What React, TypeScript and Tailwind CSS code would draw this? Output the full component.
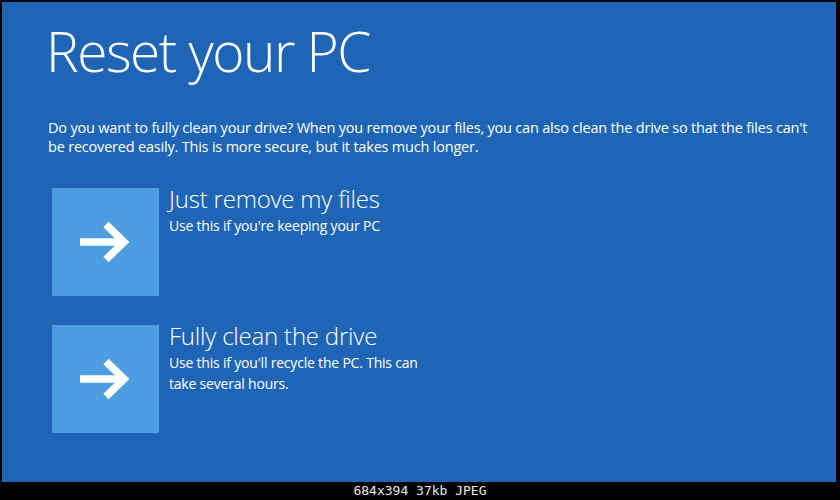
const sans = { fontFamily: '"Open Sans", "Noto Sans", sans-serif' };

function ArrowTile() {
  return (
    <div className="flex h-[108px] w-[107px] shrink-0 items-center justify-center bg-[#4c9ee0]">
      <svg width="54" height="44" viewBox="0 0 54 44" className="-ml-[2px]">
        <path d="M2 22H44" stroke="#fff" strokeWidth="7.5" />
        <path d="M28 4.5L46 22L28 39.5" stroke="#fff" strokeWidth="7.5" fill="none" strokeLinejoin="miter" />
      </svg>
    </div>
  );
}

function Option({ title, lines }: { title: string; lines: string[] }) {
  return (
    <div className="flex gap-[10px]">
      <ArrowTile />
      <div className="-mt-[3px] text-white">
        <div className="text-[24px] font-light leading-[28px] tracking-[-0.2px]">{title}</div>
        <div className="mt-[2px]">
          {lines.map((l) => (
            <div key={l} className="text-[14px] leading-[21px] tracking-[-0.2px]">
              {l}
            </div>
          ))}
        </div>
      </div>
    </div>
  );
}

export default function App() {
  return (
    <div className="flex h-[500px] w-[840px] flex-col bg-black" style={sans}>
      <div className="mx-[2px] mt-[2px] mr-[4px] flex flex-1 flex-col bg-[#1f65b5] pl-[46px] text-white">
        <h1 className="-ml-[2px] mt-[17px] text-[55px] font-light leading-[64px] tracking-[-1.5px]">Reset your PC</h1>
        <p className="mt-[35px] w-[765px] text-[14.5px] leading-[19px] tracking-[-0.2px]">
          Do you want to fully clean your drive? When you remove your files, you can also clean the drive so that the files can't
          be recovered easily. This is more secure, but it takes much longer.
        </p>
        <div className="mt-[32px] ml-[4px] flex flex-col gap-[29px]">
          <Option title="Just remove my files" lines={["Use this if you're keeping your PC"]} />
          <Option title="Fully clean the drive" lines={["Use this if you'll recycle the PC. This can", 'take several hours.']} />
        </div>
      </div>
      <div
        className="flex h-[18px] items-center justify-center text-[13px] text-[#e8e8e8]"
        style={{ fontFamily: '"DejaVu Sans Mono", monospace' }}
      >
        684x394 37kb JPEG
      </div>
    </div>
  );
}
